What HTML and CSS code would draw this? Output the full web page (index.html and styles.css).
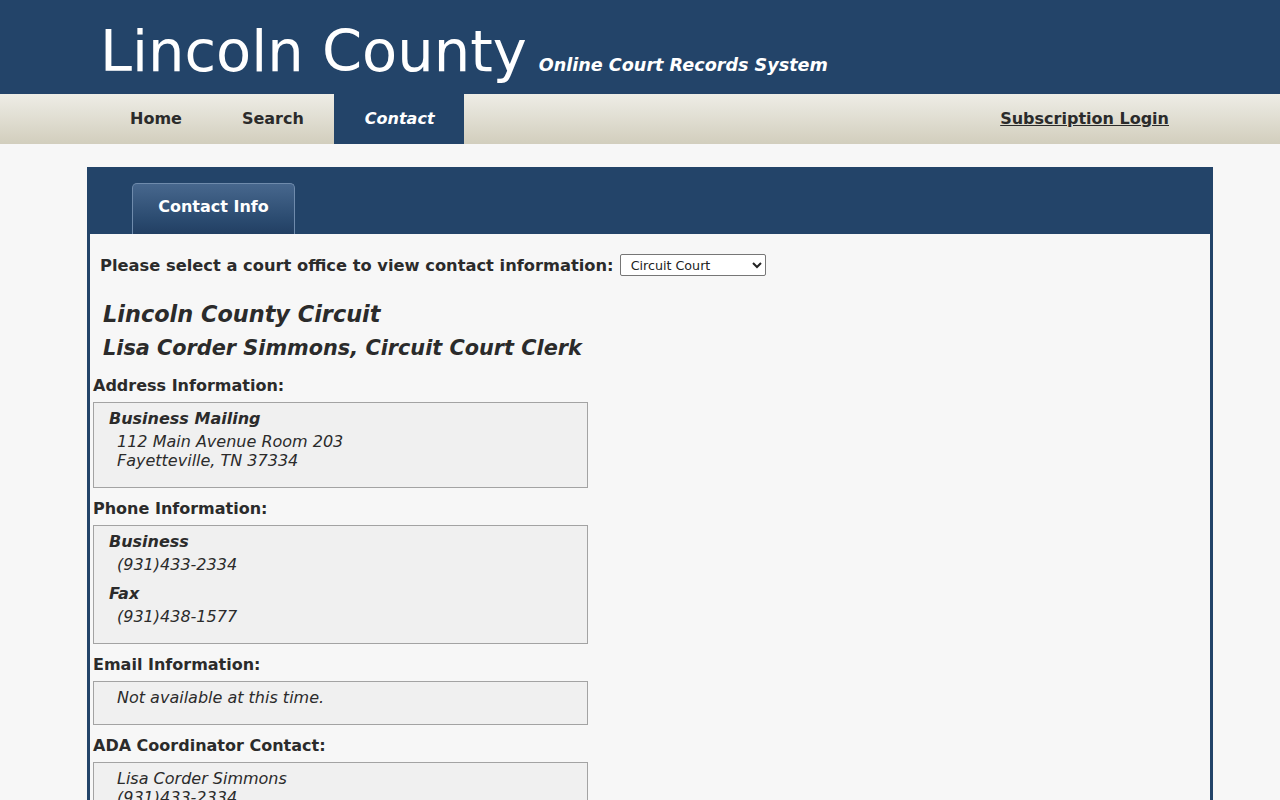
FILE: index.html
```html
<!DOCTYPE html>
<html>
<head>
<meta charset="utf-8">
<title>Lincoln County - Online Court Records System</title>
<link rel="stylesheet" href="styles.css">
</head>
<body>
<header class="masthead">
  <div class="wrap masthead-inner">
    <span class="site-title">Lincoln County</span>
    <span class="site-sub">Online Court Records System</span>
  </div>
</header>
<nav class="navbar">
  <div class="wrap nav-inner">
    <ul class="nav-list">
      <li><a class="nav-item" href="#">Home</a></li>
      <li><a class="nav-item" href="#">Search</a></li>
      <li><a class="nav-item active" href="#">Contact</a></li>
    </ul>
    <a class="login" href="#">Subscription Login</a>
  </div>
</nav>
<main class="panel">
  <div class="panel-head">
    <div class="tab">Contact Info</div>
  </div>
  <div class="panel-body">
    <div class="select-row">
      <label class="select-label" for="office">Please select a court office to view contact information:</label>
      <select id="office" class="office-select">
        <option>Circuit Court</option>
        <option>General Sessions</option>
        <option>Chancery Court</option>
      </select>
    </div>
    <h2 class="office-title">Lincoln County Circuit</h2>
    <h3 class="office-sub">Lisa Corder Simmons, Circuit Court Clerk</h3>

    <h4 class="section-head">Address Information:</h4>
    <div class="info-box">
      <div class="entry">
        <div class="entry-title">Business Mailing</div>
        <div class="entry-value">112 Main Avenue Room 203<br>Fayetteville, TN 37334</div>
      </div>
    </div>

    <h4 class="section-head">Phone Information:</h4>
    <div class="info-box">
      <div class="entry">
        <div class="entry-title">Business</div>
        <div class="entry-value">(931)433-2334</div>
      </div>
      <div class="entry">
        <div class="entry-title">Fax</div>
        <div class="entry-value">(931)438-1577</div>
      </div>
    </div>

    <h4 class="section-head">Email Information:</h4>
    <div class="info-box">
      <div class="entry">
        <div class="entry-value">Not available at this time.</div>
      </div>
    </div>

    <h4 class="section-head">ADA Coordinator Contact:</h4>
    <div class="info-box">
      <div class="entry">
        <div class="entry-value">Lisa Corder Simmons<br>(931)433-2334</div>
      </div>
    </div>
  </div>
</main>
</body>
</html>
```
FILE: styles.css
```css
html, body {
  margin: 0;
  padding: 0;
}
body {
  background: #f7f7f7;
  color: #2b2b2b;
  font-family: "DejaVu Sans", Verdana, sans-serif;
  font-size: 16px;
}
.wrap {
  width: 1080px;
  margin-left: 100px;
}
.masthead {
  background: #234469;
  height: 94px;
}
.masthead-inner {
  display: flex;
  align-items: baseline;
  height: 94px;
  box-sizing: border-box;
  padding-top: 19px;
}
.site-title {
  color: #ffffff;
  font-size: 57.5px;
  line-height: 66px;
  font-weight: normal;
}
.site-sub {
  color: #ffffff;
  font-size: 17.6px;
  font-weight: bold;
  font-style: italic;
  margin-left: 12px;
}
.navbar {
  height: 50px;
  background: linear-gradient(to bottom, #eeede6 0%, #d2cebd 100%);
}
.nav-inner {
  display: flex;
  align-items: stretch;
  justify-content: space-between;
  height: 50px;
}
.nav-list {
  display: flex;
  list-style: none;
  margin: 0;
  padding: 0;
}
.nav-item {
  display: flex;
  align-items: center;
  height: 48px;
  padding: 0 30px;
  color: #2b2b2b;
  font-weight: bold;
  font-size: 16px;
  text-decoration: none;
}
.nav-item.active {
  height: 50px;
  padding: 0 29px 2px 31px;
  box-sizing: border-box;
  background: #234469;
  color: #ffffff;
  font-style: italic;
}
.login {
  display: flex;
  align-items: center;
  padding: 0 11px 2px 0;
  color: #2b2b2b;
  font-weight: bold;
  font-size: 16px;
  text-decoration: underline;
}
.panel {
  display: block;
  margin: 23px 0 0 87px;
  width: 1126px;
  box-sizing: border-box;
  border-left: 3px solid #234469;
  border-right: 3px solid #234469;
}
.panel-head {
  background: #234469;
  height: 67px;
  margin: 0 -3px;
  display: flex;
  align-items: flex-end;
  padding-left: 45px;
}
.tab {
  height: 51px;
  box-sizing: border-box;
  width: 163px;
  border: 1px solid #6f8bac;
  border-bottom: none;
  border-radius: 5px 5px 0 0;
  background: linear-gradient(to bottom, #47678d 0%, #2b4b70 70%, #223f63 100%);
  color: #ffffff;
  font-weight: bold;
  font-size: 16px;
  display: flex;
  align-items: center;
  justify-content: center;
  padding-bottom: 5px;
}
.panel-body {
  background: #f7f7f7;
  padding: 20px 10px 0 3px;
  min-height: 600px;
}
.select-row {
  display: flex;
  align-items: center;
  margin-left: 7px;
  height: 22px;
}
.select-label {
  font-weight: bold;
  font-size: 16.3px;
}
.office-select {
  margin-left: 6px;
  width: 146px;
  height: 22px;
  font-family: "DejaVu Sans", Verdana, sans-serif;
  font-size: 12.7px;
  color: #222;
  background: #ffffff;
  border: 1px solid #767676;
  border-radius: 2px;
  padding: 0 4px 0 6px;
}
.office-title {
  margin: 25px 0 0 10px;
  font-size: 22.4px;
  line-height: 26px;
  font-weight: bold;
  font-style: italic;
}
.office-sub {
  margin: 8px 0 0 10px;
  font-size: 20.8px;
  line-height: 26px;
  font-weight: bold;
  font-style: italic;
}
.section-head {
  margin: 11px 0 7px 0;
  font-size: 16px;
  line-height: 19px;
  font-weight: bold;
}
.office-sub + .section-head {
  margin-top: 15px;
}
.info-box {
  width: 495px;
  box-sizing: border-box;
  background: #f0f0f0;
  border: 1px solid #a3a3a3;
  padding: 6px 0 7px 15px;
}
.entry {
  margin-bottom: 10px;
}
.entry-title {
  font-weight: bold;
  font-style: italic;
  line-height: 19px;
  margin-bottom: 4px;
}
.entry-value {
  font-style: italic;
  line-height: 19px;
  padding-left: 8px;
}
```
